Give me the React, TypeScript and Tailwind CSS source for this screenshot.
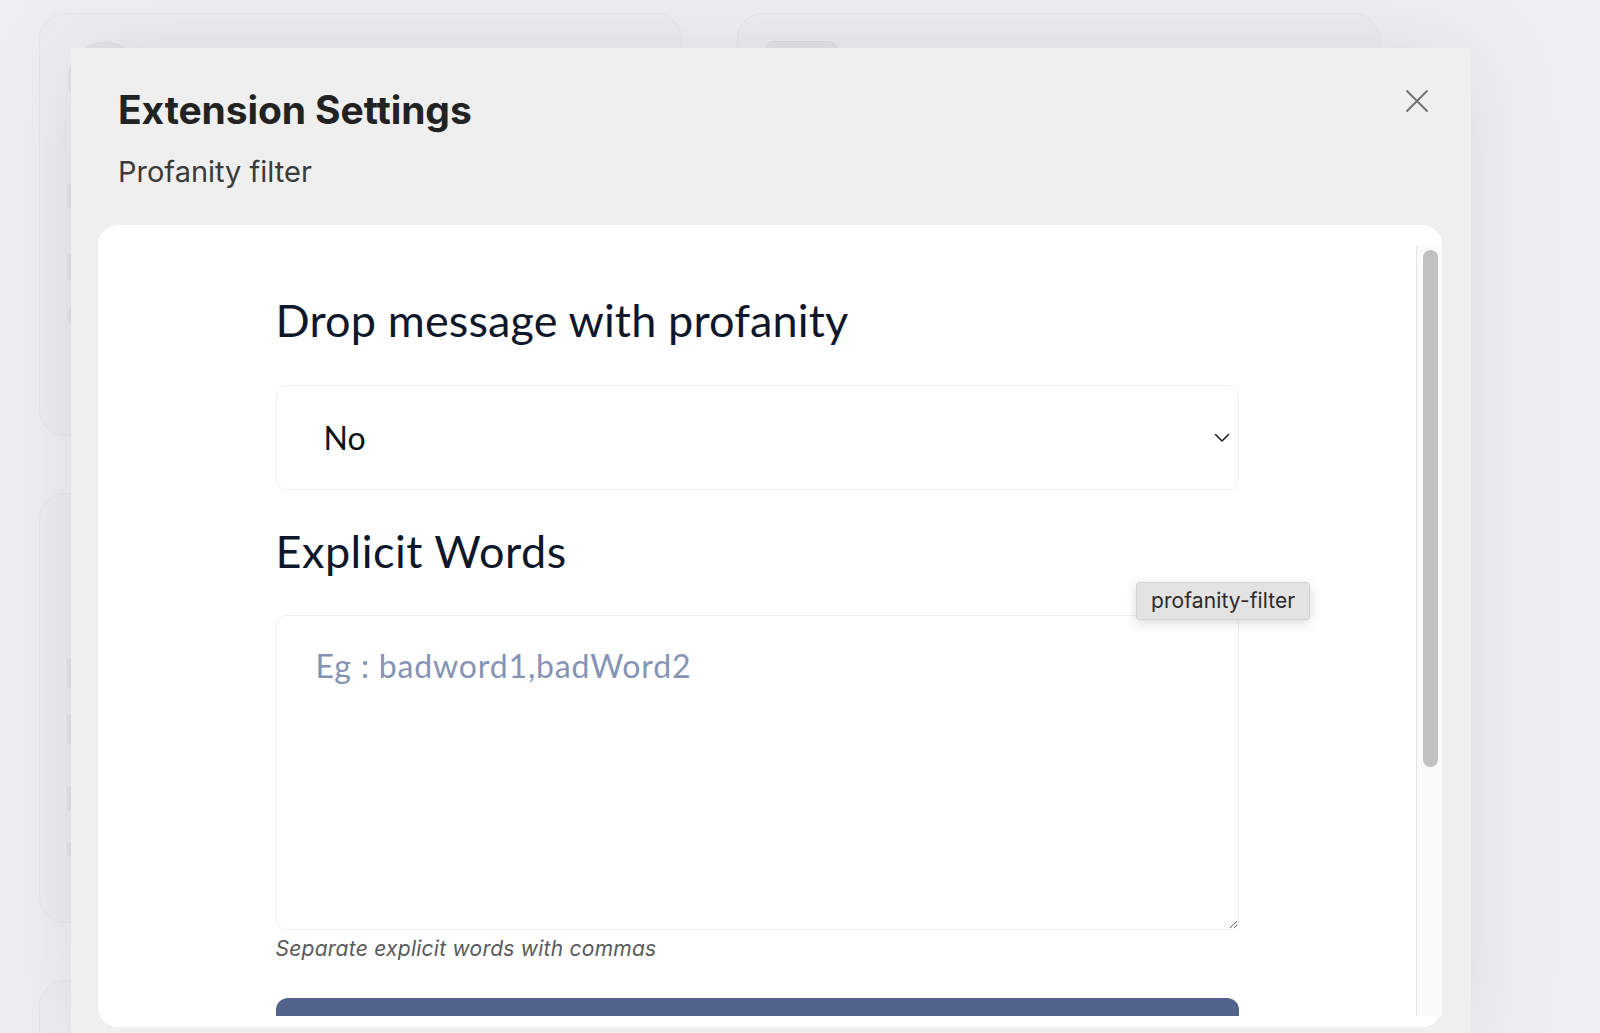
import React from "react";

const inter = { fontFamily: "Inter, 'Noto Sans', sans-serif" };

export default function App() {
  return (
    <div className="relative h-[1033px] w-[1600px] overflow-hidden bg-[#eeeef2]">
      {/* background page */}
      <div className="grid grid-cols-[643px_643px] gap-x-[55px] gap-y-[57px] pl-[39px] pt-[13px]">
        <div className="h-[423px] rounded-[26px] border border-[#e2e2e7] bg-[#ebebef] pt-[28px]">
          <div className="ml-[28px] h-[75px] w-[75px] rounded-full border border-[#d6d6dc] bg-[#e0e0e5]" />
          <div className="ml-[27px] mt-[66px] h-[26px] w-[60px] rounded-[3px] bg-[#dcdce1]" />
          <div className="ml-[27px] mt-[45px] h-[26px] w-[60px] rounded-[3px] bg-[#dcdce1]" />
          <div className="ml-[27px] mt-[25px] h-[21px] w-[60px] rounded-full bg-[#dcdce1]" />
        </div>
        <div className="h-[423px] rounded-[26px] border border-[#e2e2e7] bg-[#ebebef] pt-[27px]">
          <div className="ml-[27px] h-[60px] w-[72px] rounded-[8px] border border-[#d2d2d8] bg-[#dedee3]" />
        </div>
        <div className="h-[430px] rounded-[26px] border border-[#e2e2e7] bg-[#ebebef] pt-[164px]">
          <div className="ml-[27px] h-[31px] w-[60px] rounded-[3px] bg-[#dcdce1]" />
          <div className="ml-[27px] mt-[25px] h-[31px] w-[60px] rounded-[3px] bg-[#dcdce1]" />
          <div className="ml-[27px] mt-[41px] h-[25px] w-[60px] rounded-[3px] bg-[#dcdce1]" />
          <div className="ml-[27px] mt-[31px] h-[15px] w-[60px] rounded-[3px] bg-[#dcdce1]" />
        </div>
        <div className="h-[430px] rounded-[26px] border border-[#e2e2e7] bg-[#ebebef]" />
        <div className="h-[200px] rounded-[26px] border border-[#e2e2e7] bg-[#ebebef]" />
        <div className="h-[200px] rounded-[26px] border border-[#e2e2e7] bg-[#ebebef]" />
      </div>

      {/* overlay */}
      <div className="absolute inset-0 bg-[rgba(245,245,248,0.25)] pl-[71px] pt-[48px]">
        <div className="flex h-[1000px] w-[1400px] flex-col bg-[#efefef] shadow-[0_0_90px_rgba(40,40,80,0.10)]">
          {/* header */}
          <div className="flex items-start justify-between pl-[47px] pr-[42px] pt-[38px]" style={inter}>
            <div>
              <div className="text-[39px] font-bold leading-[47px] tracking-[-0.1px] text-[#222222]">Extension Settings</div>
              <div className="mt-[21px] text-[29px] leading-[35px] text-[#3a3a3a]">Profanity filter</div>
            </div>
            <svg className="mt-[3px]" width="24" height="24" viewBox="0 0 24 24" fill="none" stroke="#6f6f6f" strokeWidth="1.8" strokeLinecap="round">
              <path d="M2 2 L22 22 M22 2 L2 22" />
            </svg>
          </div>

          {/* card */}
          <div className="relative ml-[27px] mr-[29px] mt-[36px] flex h-[802px] rounded-[20px] bg-white pb-[11px] pt-[20px]">
            <div className="flex-1 overflow-hidden" style={{ fontFamily: "Lato, 'Noto Sans', sans-serif" }}>
              <div className="mx-auto w-[963px] pt-[48px]">
                <div className="text-[45px] leading-[54px] tracking-[0.15px] text-[#0f172a]">Drop message with profanity</div>
                <div className="mt-[38px] flex h-[105px] items-center justify-between rounded-[10px] border border-[#eceef3] pl-[47px] pr-[8px]">
                  <span className="text-[32px] leading-[38px] text-[#111111]">No</span>
                  <svg width="16" height="10" viewBox="0 0 16 10" fill="none" stroke="#222" strokeWidth="1.6" strokeLinecap="round" strokeLinejoin="round">
                    <path d="M1.5 1.5 L8 8 L14.5 1.5" />
                  </svg>
                </div>
                <div className="mt-[34px] text-[45px] leading-[54px] tracking-[0.5px] text-[#0f172a]">Explicit Words</div>
                <textarea
                  className="mt-[37px] block h-[315px] w-full rounded-[10px] border border-[#eceef3] pl-[39px] pt-[31px] text-[32px] leading-[38px] tracking-[0.85px] text-[#111] outline-none placeholder:text-[#8594b4]"
                  placeholder="Eg : badword1,badWord2"
                  style={{ fontFamily: "Lato, 'Noto Sans', sans-serif" }}
                />
                <div
                  className="mt-[6px] text-[21px] italic leading-[25px] tracking-[0.25px] text-[#5a5a5a]"
                  style={inter}
                >
                  Separate explicit words with commas
                </div>
                <div className="mt-[37px] h-[60px] rounded-[12px] bg-[#52648b]" />
              </div>
            </div>
            {/* scrollbar */}
            <div className="w-[26px] border-l border-[#e4e4e4] bg-[#fafafa] pl-[6px] pt-[5px]">
              <div className="h-[517px] w-[15px] rounded-full bg-[#c1c1c1]" />
            </div>

            {/* tooltip */}
            <div
              className="absolute left-[1038px] top-[357px] rounded-[3px] border border-[#d3d3d3] bg-[#e3e3e3] px-[14px] py-[5px] text-[21px] leading-[26px] tracking-[0.1px] text-[#2a2a2a] shadow-[0_3px_12px_rgba(0,0,0,0.15)]"
              style={inter}
            >
              profanity-filter
            </div>
          </div>
        </div>
      </div>
    </div>
  );
}
